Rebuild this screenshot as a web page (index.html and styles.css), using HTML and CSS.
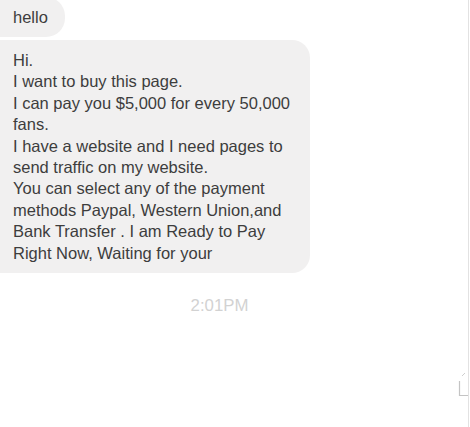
FILE: index.html
```html
<!DOCTYPE html>
<html>
<head>
<meta charset="utf-8">
<link rel="stylesheet" href="styles.css">
</head>
<body>
<div class="pane">
  <div class="thread">
    <div class="bubble hello">hello</div>
    <div class="bubble long">Hi.<br>I want to buy this page.<br>I can pay you $5,000 for every 50,000 fans.<br>I have a website and I need pages to send traffic on my website.<br>You can select any of the payment methods Paypal, Western Union,and Bank Transfer . I am Ready to Pay Right Now, Waiting for your</div>
    <div class="time">2:01PM</div>
  </div>
  <svg class="corner-icon" width="12" height="30" viewBox="0 0 12 30">
    <path d="M1.5 13 V27.5 H11" fill="none" stroke="#c4c4c4" stroke-width="1.2"/>
    <path d="M4 8 L7 5" fill="none" stroke="#cfcfcf" stroke-width="1"/>
  </svg>
</div>
</body>
</html>
```
FILE: styles.css
```css
html, body {
  margin: 0;
  padding: 0;
  background: #ffffff;
}
.pane {
  position: relative;
  width: 468px;
  height: 427px;
  border-right: 1px solid #e2e2e2;
  overflow: hidden;
}
.thread {
  display: flex;
  flex-direction: column;
  align-items: flex-start;
  font-family: "Liberation Sans", Arial, sans-serif;
  font-size: 16.5px;
  line-height: 21.4px;
  color: #3d3d3d;
}
.bubble {
  background: #f1f0f0;
  padding: 9.5px 12px 9.5px 13px;
  border-radius: 0 19px 19px 0;
}
.hello {
  margin-top: -3px;
  padding-right: 17px;
}
.long {
  margin-top: 3px;
  width: 285px;
  border-radius: 0 18px 18px 0;
}
.time {
  align-self: stretch;
  text-align: center;
  padding-right: 29px;
  margin-top: 23px;
  font-size: 16.8px;
  line-height: 19.32px;
  color: #d2d2d2;
}
.corner-icon {
  position: absolute;
  left: 458px;
  top: 368px;
}
```
